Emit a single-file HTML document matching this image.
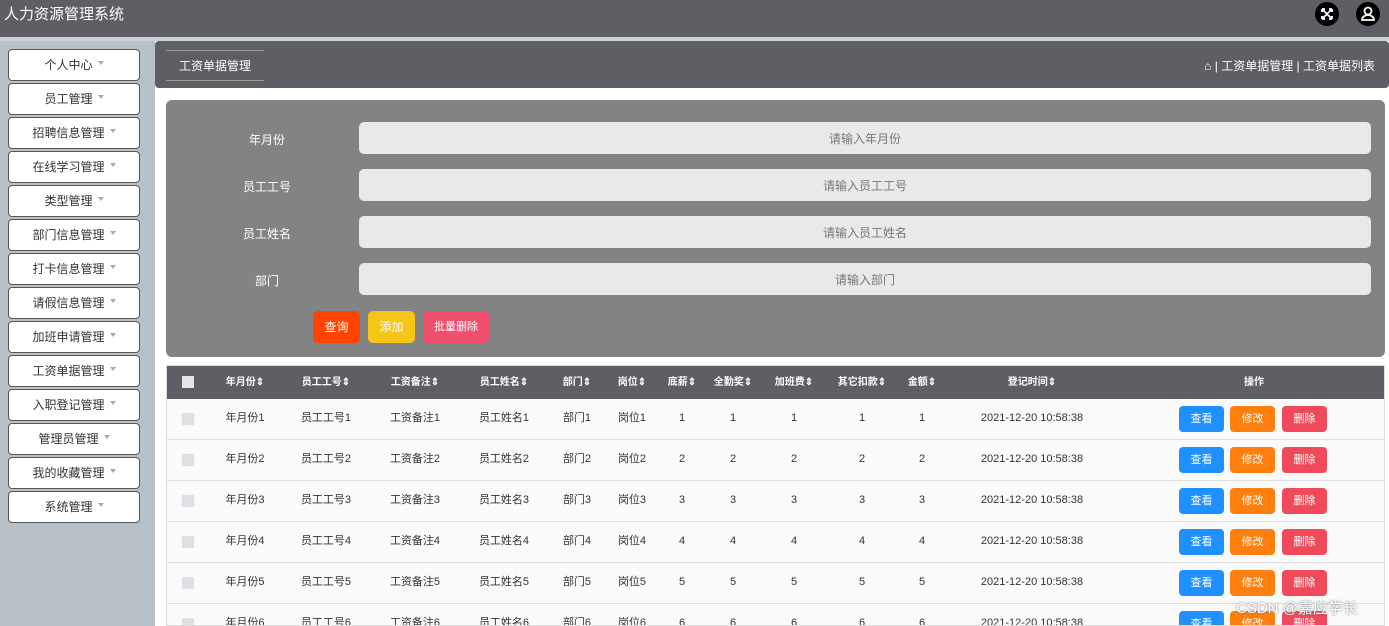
<!DOCTYPE html>
<html><head><meta charset="utf-8"><style>
*{margin:0;padding:0;box-sizing:border-box}
body{width:1389px;height:626px;overflow:hidden;background:#fff;font-family:"Liberation Sans","Noto Sans CJK SC",sans-serif;font-size:12px;color:#333;position:relative}
.top{position:absolute;left:0;top:0;width:1389px;height:37px;background:#5f5e64;color:#fff;font-size:15px;line-height:29px;padding-left:4px}
.strip{position:absolute;left:0;top:37px;width:1389px;height:4px;background:#c9d3d5}
.side{position:absolute;left:0;top:41px;width:155px;height:585px;background:#b9c1c8}
.sb{position:absolute;left:8px;width:132px;height:32px;background:#fff;border:1px solid #555;border-radius:4px;text-align:center;line-height:31px;font-size:12px;color:#333}
.sb:after{content:"";display:inline-block;margin-left:5px;border:3.5px solid transparent;border-top:4px solid #aaa;vertical-align:1px}
.bc{position:absolute;left:155px;top:41px;width:1234px;height:47px;background:#5f5e64;border-radius:4px;color:#fff}
.bc .t{position:absolute;left:11px;top:9px;width:98px;height:31px;border-top:1px solid #999;border-bottom:1px solid #999;text-align:center;line-height:30px}
.bc .r{position:absolute;right:14px;top:16px}
.panel{position:absolute;left:166px;top:100px;width:1219px;height:257px;background:#838383;border-radius:6px}
.lab{position:absolute;width:200px;left:167px;text-align:center;color:#fff}
.inp{position:absolute;left:359px;width:1012px;height:32px;background:#e9e9eb;border-radius:5px;text-align:center;line-height:34px;color:#777}
.btn{position:absolute;height:32px;border-radius:5px;color:#fff;text-align:center;line-height:32px}
.tbl{position:absolute;left:166px;top:365px;width:1219px;height:261px;border:1px solid #ddd;overflow:hidden;font-size:11px}
.hd{height:33px;background:#5f5e64;color:#fff;font-weight:bold;font-size:10px;position:relative}
.row{height:41px;position:relative;border-bottom:1px solid #ddd;background:#fafafa}
.c{position:absolute;top:0;transform:translateX(-50%);white-space:nowrap}
.hd .c{line-height:33px}.row .c{line-height:39px}
.cb{position:absolute;left:15px;width:12px;height:12px;background:#dde0e4}
.ob{position:absolute;top:7px;width:45px;height:26px;border-radius:4px;color:#fff;text-align:center;line-height:26px;font-size:11px}
.ic{position:absolute;top:2px;width:24px;height:24px;border-radius:50%;background:#000}
</style></head><body>
<div class="top">人力资源管理系统</div>
<div class="ic" style="left:1315px"><svg width="24" height="24" viewBox="0 0 24 24" fill="none" stroke="#fff" stroke-width="1.8"><path d="M8 8l8 8M16 8l-8 8M7 7h3M7 7v3M17 7h-3M17 7v3M7 17h3M7 17v-3M17 17h-3M17 17v-3"/></svg></div>
<div class="ic" style="left:1356px"><svg width="24" height="24" viewBox="0 0 24 24" fill="none" stroke="#fff" stroke-width="1.8"><circle cx="12" cy="9" r="3.5"/><path d="M6 18c0-3 3-5 6-5s6 2 6 5z"/></svg></div>
<div class="strip"></div>
<div class="side"></div>
<div class="sb" style="top:49px">个人中心</div>
<div class="sb" style="top:83px">员工管理</div>
<div class="sb" style="top:117px">招聘信息管理</div>
<div class="sb" style="top:151px">在线学习管理</div>
<div class="sb" style="top:185px">类型管理</div>
<div class="sb" style="top:219px">部门信息管理</div>
<div class="sb" style="top:253px">打卡信息管理</div>
<div class="sb" style="top:287px">请假信息管理</div>
<div class="sb" style="top:321px">加班申请管理</div>
<div class="sb" style="top:355px">工资单据管理</div>
<div class="sb" style="top:389px">入职登记管理</div>
<div class="sb" style="top:423px">管理员管理</div>
<div class="sb" style="top:457px">我的收藏管理</div>
<div class="sb" style="top:491px">系统管理</div>
<div class="bc"><div class="t">工资单据管理</div><div class="r">⌂ | 工资单据管理 | 工资单据列表</div></div>
<div class="panel"></div>
<div class="lab" style="top:131px">年月份</div><div class="inp" style="top:122px">请输入年月份</div>
<div class="lab" style="top:178px">员工工号</div><div class="inp" style="top:169px">请输入员工工号</div>
<div class="lab" style="top:225px">员工姓名</div><div class="inp" style="top:216px">请输入员工姓名</div>
<div class="lab" style="top:272px">部门</div><div class="inp" style="top:263px">请输入部门</div>
<div class="btn" style="left:313px;top:311px;width:47px;background:#ff4500">查询</div>
<div class="btn" style="left:368px;top:311px;width:47px;background:#f5c518">添加</div>
<div class="btn" style="left:423px;top:311px;width:66px;background:#f0506e;font-size:11px">批量删除</div>
<div class="tbl">
<div class="hd"><div class="cb" style="top:10px;background:#e6e6e6"></div>
<span class="c" style="left:78px">年月份⇕</span><span class="c" style="left:159px">员工工号⇕</span><span class="c" style="left:248px">工资备注⇕</span><span class="c" style="left:337px">员工姓名⇕</span><span class="c" style="left:410px">部门⇕</span><span class="c" style="left:465px">岗位⇕</span><span class="c" style="left:515px">底薪⇕</span><span class="c" style="left:566px">全勤奖⇕</span><span class="c" style="left:627px">加班费⇕</span><span class="c" style="left:695px">其它扣款⇕</span><span class="c" style="left:755px">金额⇕</span><span class="c" style="left:865px">登记时间⇕</span><span class="c" style="left:1087px">操作</span></div>
<div class="row"><div class="cb" style="top:14px"></div><span class="c" style="left:78px">年月份1</span><span class="c" style="left:159px">员工工号1</span><span class="c" style="left:248px">工资备注1</span><span class="c" style="left:337px">员工姓名1</span><span class="c" style="left:410px">部门1</span><span class="c" style="left:465px">岗位1</span><span class="c" style="left:515px">1</span><span class="c" style="left:566px">1</span><span class="c" style="left:627px">1</span><span class="c" style="left:695px">1</span><span class="c" style="left:755px">1</span><span class="c" style="left:865px">2021-12-20 10:58:38</span><div class="ob" style="left:1012px;background:#1e90ff">查看</div><div class="ob" style="left:1063px;background:#ff7f0e">修改</div><div class="ob" style="left:1115px;background:#f04a5a">删除</div></div>
<div class="row"><div class="cb" style="top:14px"></div><span class="c" style="left:78px">年月份2</span><span class="c" style="left:159px">员工工号2</span><span class="c" style="left:248px">工资备注2</span><span class="c" style="left:337px">员工姓名2</span><span class="c" style="left:410px">部门2</span><span class="c" style="left:465px">岗位2</span><span class="c" style="left:515px">2</span><span class="c" style="left:566px">2</span><span class="c" style="left:627px">2</span><span class="c" style="left:695px">2</span><span class="c" style="left:755px">2</span><span class="c" style="left:865px">2021-12-20 10:58:38</span><div class="ob" style="left:1012px;background:#1e90ff">查看</div><div class="ob" style="left:1063px;background:#ff7f0e">修改</div><div class="ob" style="left:1115px;background:#f04a5a">删除</div></div>
<div class="row"><div class="cb" style="top:14px"></div><span class="c" style="left:78px">年月份3</span><span class="c" style="left:159px">员工工号3</span><span class="c" style="left:248px">工资备注3</span><span class="c" style="left:337px">员工姓名3</span><span class="c" style="left:410px">部门3</span><span class="c" style="left:465px">岗位3</span><span class="c" style="left:515px">3</span><span class="c" style="left:566px">3</span><span class="c" style="left:627px">3</span><span class="c" style="left:695px">3</span><span class="c" style="left:755px">3</span><span class="c" style="left:865px">2021-12-20 10:58:38</span><div class="ob" style="left:1012px;background:#1e90ff">查看</div><div class="ob" style="left:1063px;background:#ff7f0e">修改</div><div class="ob" style="left:1115px;background:#f04a5a">删除</div></div>
<div class="row"><div class="cb" style="top:14px"></div><span class="c" style="left:78px">年月份4</span><span class="c" style="left:159px">员工工号4</span><span class="c" style="left:248px">工资备注4</span><span class="c" style="left:337px">员工姓名4</span><span class="c" style="left:410px">部门4</span><span class="c" style="left:465px">岗位4</span><span class="c" style="left:515px">4</span><span class="c" style="left:566px">4</span><span class="c" style="left:627px">4</span><span class="c" style="left:695px">4</span><span class="c" style="left:755px">4</span><span class="c" style="left:865px">2021-12-20 10:58:38</span><div class="ob" style="left:1012px;background:#1e90ff">查看</div><div class="ob" style="left:1063px;background:#ff7f0e">修改</div><div class="ob" style="left:1115px;background:#f04a5a">删除</div></div>
<div class="row"><div class="cb" style="top:14px"></div><span class="c" style="left:78px">年月份5</span><span class="c" style="left:159px">员工工号5</span><span class="c" style="left:248px">工资备注5</span><span class="c" style="left:337px">员工姓名5</span><span class="c" style="left:410px">部门5</span><span class="c" style="left:465px">岗位5</span><span class="c" style="left:515px">5</span><span class="c" style="left:566px">5</span><span class="c" style="left:627px">5</span><span class="c" style="left:695px">5</span><span class="c" style="left:755px">5</span><span class="c" style="left:865px">2021-12-20 10:58:38</span><div class="ob" style="left:1012px;background:#1e90ff">查看</div><div class="ob" style="left:1063px;background:#ff7f0e">修改</div><div class="ob" style="left:1115px;background:#f04a5a">删除</div></div>
<div class="row"><div class="cb" style="top:14px"></div><span class="c" style="left:78px">年月份6</span><span class="c" style="left:159px">员工工号6</span><span class="c" style="left:248px">工资备注6</span><span class="c" style="left:337px">员工姓名6</span><span class="c" style="left:410px">部门6</span><span class="c" style="left:465px">岗位6</span><span class="c" style="left:515px">6</span><span class="c" style="left:566px">6</span><span class="c" style="left:627px">6</span><span class="c" style="left:695px">6</span><span class="c" style="left:755px">6</span><span class="c" style="left:865px">2021-12-20 10:58:38</span><div class="ob" style="left:1012px;background:#1e90ff">查看</div><div class="ob" style="left:1063px;background:#ff7f0e">修改</div><div class="ob" style="left:1115px;background:#f04a5a">删除</div></div>
</div>
<div style="position:absolute;left:1236px;top:597px;color:#fff;font-size:15px;text-shadow:0 0 2px #666">CSDN @嘉应学长</div>
</body></html>
